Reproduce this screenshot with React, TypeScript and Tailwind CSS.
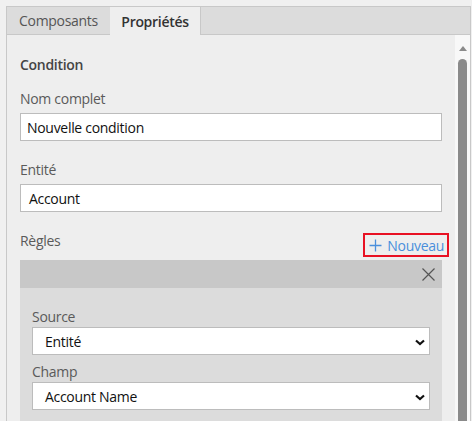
import React from "react";

const font = { fontFamily: '"Open Sans", "Noto Sans", sans-serif' };

const Chevron = () => (
  <svg width="10" height="7" viewBox="0 0 10 7" className="absolute right-[4px] top-[11px] pointer-events-none">
    <path d="M1 1.5 L5 5 L9 1.5" stroke="#111" strokeWidth="2.2" fill="none" />
  </svg>
);

const Field = ({ label, value }: { label: string; value: string }) => (
  <div className="flex flex-col">
    <div className="text-[#5a5a5a] leading-5">{label}</div>
    <div className="relative mt-0 h-[28px] bg-white border border-[#bcbcbc] pl-[12px] pr-[20px] flex items-center text-[#111]">
      {value}
      <Chevron />
    </div>
  </div>
);

const App = () => {
  return (
    <div className="w-[472px] h-[421px] bg-[#f0f0f0] pt-[6px] pl-[6px] overflow-hidden text-[14px] tracking-[-0.3px]" style={font}>
      <div className="w-[465px] h-[415px] border-l border-t border-r border-[#c8c8c8] flex flex-col">
        <div className="flex h-[28px] bg-[#dcdcdc] border-b border-[#c8c8c8]">
          <div className="w-[103px] flex items-center justify-center text-[#555]">Composants</div>
          <div className="w-[91px] h-[28px] flex items-center justify-center font-semibold text-[#333] bg-[#eeeeee] border-r border-[#c8c8c8]">
            Propriétés
          </div>
        </div>
        <div className="flex flex-1 bg-[#eeeeee] min-h-0">
          <div className="flex-1 pl-[13px] pr-[13px] flex flex-col">
            <div className="mt-[20px] leading-5 font-semibold text-[#444]">Condition</div>
            <div className="mt-[14px] leading-5 text-[#5a5a5a]">Nom complet</div>
            <div className="mt-[4px] h-[28px] bg-white border border-[#bcbcbc] px-[6px] flex items-center text-[#111]">
              Nouvelle condition
            </div>
            <div className="mt-[19px] leading-5 text-[#5a5a5a]">Entité</div>
            <div className="mt-[4px] h-[28px] bg-white border border-[#bcbcbc] px-[8px] flex items-center text-[#111]">
              Account
            </div>
            <div className="mt-[21px] flex justify-between items-start">
              <div className="-mt-[2px] leading-5 text-[#5a5a5a]">Règles</div>
              <button className="-mr-[7px] h-[24px] pl-[4px] pr-[3px] border-2 border-[#e81123] flex items-center gap-[5px] text-[#4a8fdc]">
                <svg width="13" height="13" viewBox="0 0 13 13">
                  <path d="M6.5 0.5 V12.5 M0.5 6.5 H12.5" stroke="#4a8fdc" strokeWidth="1.3" />
                </svg>
                Nouveau
              </button>
            </div>
            <div className="mt-[3px] bg-[#dcdcdc] flex-1">
              <div className="h-[28px] bg-[#c8c8c8] flex justify-end items-center pr-[7px]">
                <svg width="13" height="13" viewBox="0 0 13 13">
                  <path d="M0.5 0.5 L12.5 12.5 M12.5 0.5 L0.5 12.5" stroke="#555" strokeWidth="1.2" />
                </svg>
              </div>
              <div className="px-[12px] pt-[19px] flex flex-col gap-[7px]">
                <Field label="Source" value="Entité" />
                <Field label="Champ" value="Account Name" />
              </div>
            </div>
          </div>
          <div className="w-[15px] bg-[#f8f8f8] flex flex-col items-center pt-[11px]">
            <div className="w-0 h-0 border-l-[4px] border-r-[4px] border-b-[5px] border-l-transparent border-r-transparent border-b-[#8a8a8a]" />
            <div className="mt-[8px] w-[9px] flex-1 bg-[#8a8a8a] rounded-t-[5px]" />
          </div>
        </div>
      </div>
    </div>
  );
};

export default App;
